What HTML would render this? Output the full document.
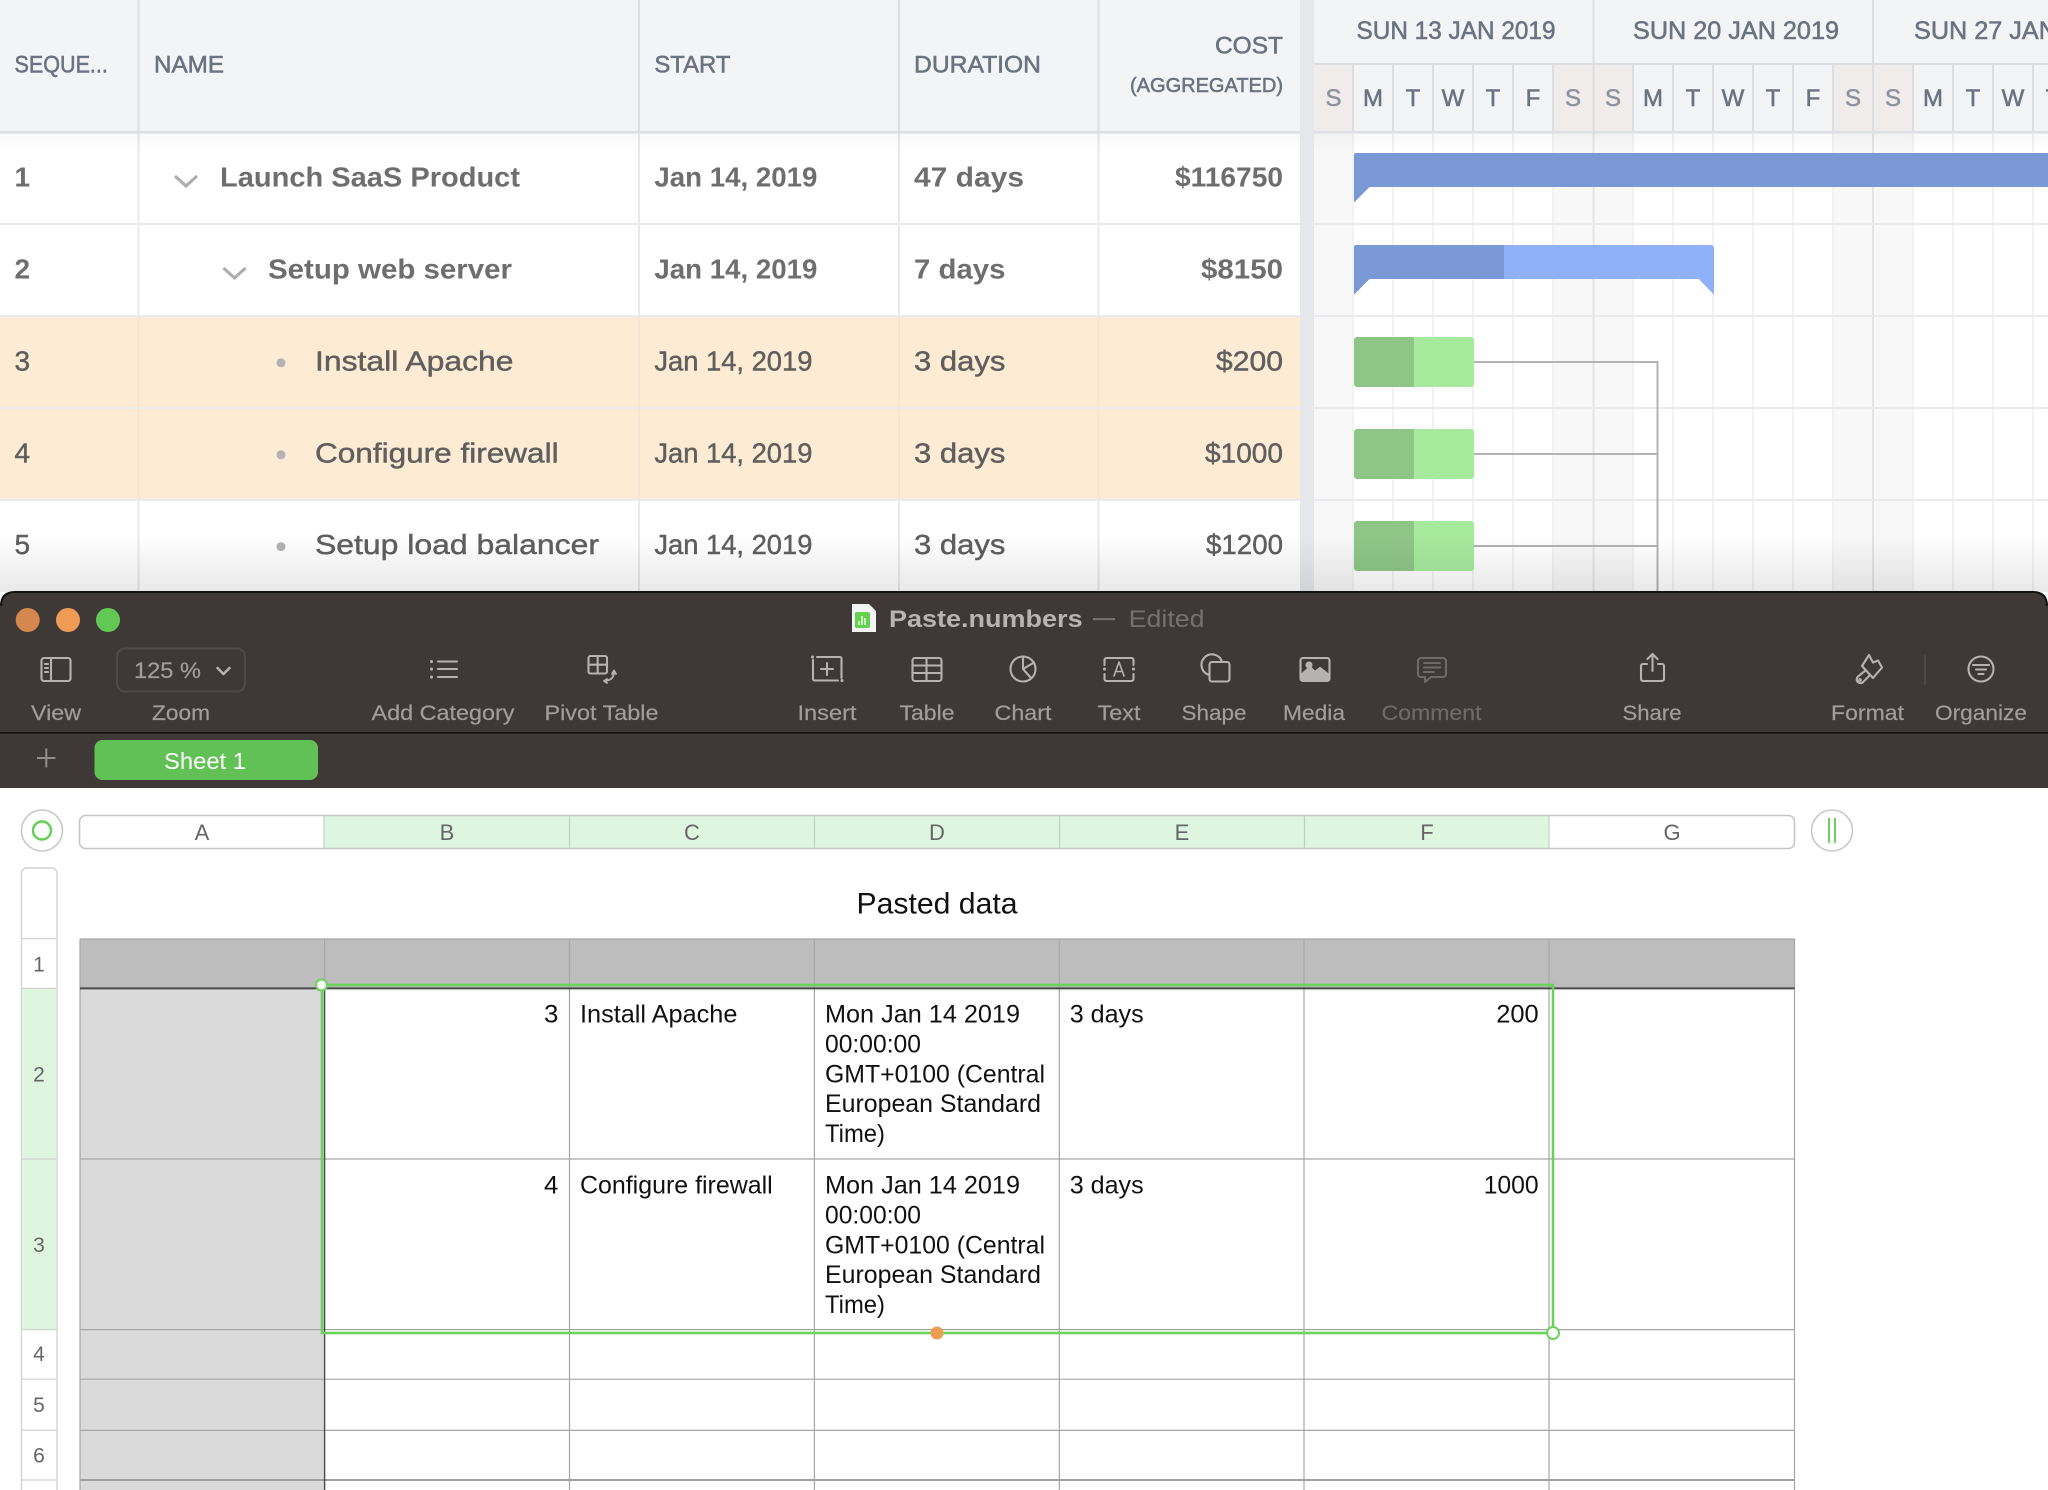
<!DOCTYPE html>
<html><head><meta charset="utf-8"><title>Paste.numbers</title>
<style>
html,body{margin:0;padding:0;background:#fff;width:2048px;height:1490px;overflow:hidden}
svg{display:block}
text{font-family:"Liberation Sans",sans-serif}
.h{font-size:24px;fill:#6b7280;stroke:#6b7280;stroke-width:.55}
.b{font-size:28px;font-weight:700;fill:#6e6e6e}
.r{font-size:28px;fill:#5f5f5f;stroke:#5f5f5f;stroke-width:.45}
.d{font-size:24px;fill:#6b7280;stroke:#6b7280;stroke-width:.55;text-anchor:middle}
.w{fill:#8f949c;stroke:#8f949c}
.t{font-size:21px;fill:#a19d9a;stroke:#a19d9a;stroke-width:.2}
.i{fill:none;stroke:#b6b2af;stroke-width:2.1;stroke-linecap:round;stroke-linejoin:round}
.c{font-size:25.3px;fill:#111}
.k{font-size:22px;fill:#666;text-anchor:middle}
.n{font-size:21px;fill:#666;text-anchor:middle}
</style></head><body>
<svg width="2048" height="1490" viewBox="0 0 2048 1490" xmlns="http://www.w3.org/2000/svg">
<defs>
<linearGradient id="sh" x1="0" y1="0" x2="0" y2="1"><stop offset="0" stop-color="#000" stop-opacity="0"/><stop offset="1" stop-color="#000" stop-opacity=".09"/></linearGradient>
<linearGradient id="hs" x1="0" y1="0" x2="0" y2="1"><stop offset="0" stop-color="#000" stop-opacity=".03"/><stop offset="1" stop-color="#000" stop-opacity="0"/></linearGradient>
</defs>
<rect width="2048" height="1490" fill="#fff"/>

<!-- gantt table header -->
<rect x="0" y="0" width="2048" height="132" fill="#f3f4f6"/>
<!-- highlighted rows -->
<rect x="0" y="316" width="1300" height="184" fill="#fdebd3"/>
<!-- gantt weekend columns -->
<g fill="#f8f8f8"><rect x="1314" y="133" width="39" height="460"/><rect x="1553" y="133" width="80" height="460"/><rect x="1833" y="133" width="80" height="460"/></g>
<!-- gantt header weekend -->
<g fill="#f1ecec"><rect x="1314" y="65" width="39" height="66"/><rect x="1553" y="65" width="80" height="66"/><rect x="1833" y="65" width="80" height="66"/></g>
<!-- gantt day lines body -->
<g stroke="#f1f2f3" stroke-width="2">
<path d="M1353 133V592M1393 133V592M1433 133V592M1473 133V592M1513 133V592M1553 133V592M1633 133V592M1673 133V592M1713 133V592M1753 133V592M1793 133V592M1833 133V592M1913 133V592M1953 133V592M1993 133V592M2033 133V592"/>
</g>
<g stroke="#e4e4e5" stroke-width="2"><path d="M1593.5 133V592M1873 133V592"/></g>
<!-- day lines header -->
<g stroke="#dcdee1" stroke-width="2">
<path d="M1353 65V132M1393 65V132M1433 65V132M1473 65V132M1513 65V132M1553 65V132M1633 65V132M1673 65V132M1713 65V132M1753 65V132M1793 65V132M1833 65V132M1913 65V132M1953 65V132M1993 65V132M2033 65V132"/>
<path d="M1593.5 0V132M1873 0V132M1314 64H2048"/>
<path d="M138.5 0V132M639 0V132M899 0V132M1098.5 0V132"/>
</g>
<!-- body row lines -->
<g stroke="#eaebec" stroke-width="2"><path d="M0 224H2048M0 316H2048M0 408H2048M0 500H2048"/></g>
<!-- body col lines -->
<g stroke="#e8e9eb" stroke-width="2"><path d="M138.5 133V316M138.5 500V592M639 133V592M899 133V592M1098.5 133V592"/></g>
<g stroke="#f4e6d3" stroke-width="2"><path d="M138.5 317V499M639 317V407M639 409V499M899 317V407M899 409V499M1098.5 317V407M1098.5 409V499"/></g>
<!-- header bottom and shadow -->
<rect x="0" y="133" width="2048" height="18" fill="url(#hs)"/>
<rect x="0" y="131" width="2048" height="2.5" fill="#dcdee1"/>
<!-- splitter -->
<rect x="1300" y="0" width="14" height="592" fill="#e6e7ea"/>

<!-- header text -->
<text class="h" x="14.5" y="72.7" textLength="93.4" lengthAdjust="spacingAndGlyphs">SEQUE...</text>
<text class="h" x="154" y="72.7" textLength="70" lengthAdjust="spacingAndGlyphs">NAME</text>
<text class="h" x="654.4" y="72.7" textLength="76" lengthAdjust="spacingAndGlyphs">START</text>
<text class="h" x="914" y="72.7" textLength="127" lengthAdjust="spacingAndGlyphs">DURATION</text>
<text class="h" x="1215" y="53.6" textLength="68" lengthAdjust="spacingAndGlyphs">COST</text>
<text class="h" style="font-size:20px" x="1130" y="92" textLength="153" lengthAdjust="spacingAndGlyphs">(AGGREGATED)</text>
<text class="h" style="font-size:25px" x="1356.5" y="39" textLength="199" lengthAdjust="spacingAndGlyphs">SUN 13 JAN 2019</text>
<text class="h" style="font-size:25px" x="1633" y="39" textLength="206" lengthAdjust="spacingAndGlyphs">SUN 20 JAN 2019</text>
<text class="h" style="font-size:25px" x="1914" y="39" textLength="206" lengthAdjust="spacingAndGlyphs">SUN 27 JAN 2019</text>

<text class="d w" x="1333.5" y="106">S</text><text class="d" x="1373" y="106">M</text><text class="d" x="1413" y="106">T</text><text class="d" x="1453" y="106">W</text><text class="d" x="1493" y="106">T</text><text class="d" x="1533" y="106">F</text><text class="d w" x="1573" y="106">S</text>
<text class="d w" x="1613" y="106">S</text><text class="d" x="1653" y="106">M</text><text class="d" x="1693" y="106">T</text><text class="d" x="1733" y="106">W</text><text class="d" x="1773" y="106">T</text><text class="d" x="1813" y="106">F</text><text class="d w" x="1853" y="106">S</text>
<text class="d w" x="1893" y="106">S</text><text class="d" x="1933" y="106">M</text><text class="d" x="1973" y="106">T</text><text class="d" x="2013" y="106">W</text><text class="d" x="2053" y="106">T</text>

<!-- rows -->
<g transform="translate(0,-1)">
<text class="b" x="14.5" y="187.5">1</text>
<path d="M175 177L186 187L197 177" fill="none" stroke="#aeaeae" stroke-width="3.2"/>
<text class="b" x="220" y="187.5" textLength="300" lengthAdjust="spacingAndGlyphs">Launch SaaS Product</text>
<text class="b" x="654.4" y="187.5" textLength="163" lengthAdjust="spacingAndGlyphs">Jan 14, 2019</text>
<text class="b" x="914" y="187.5" textLength="110" lengthAdjust="spacingAndGlyphs">47 days</text>
<text class="b" x="1175" y="187.5" textLength="108" lengthAdjust="spacingAndGlyphs">$116750</text>

<text class="b" x="14.5" y="279.5">2</text>
<path d="M223.5 269L234.5 279L245.5 269" fill="none" stroke="#aeaeae" stroke-width="3.2"/>
<text class="b" x="268" y="279.5" textLength="244" lengthAdjust="spacingAndGlyphs">Setup web server</text>
<text class="b" x="654.4" y="279.5" textLength="163" lengthAdjust="spacingAndGlyphs">Jan 14, 2019</text>
<text class="b" x="914" y="279.5" textLength="91.4" lengthAdjust="spacingAndGlyphs">7 days</text>
<text class="b" x="1201" y="279.5" textLength="82" lengthAdjust="spacingAndGlyphs">$8150</text>

<text class="r" x="14.5" y="371.5">3</text>
<circle cx="281" cy="363.8" r="4.5" fill="#b3b3b3"/>
<text class="r" x="315" y="371.5" textLength="198.5" lengthAdjust="spacingAndGlyphs">Install Apache</text>
<text class="r" x="654.4" y="371.5" textLength="158" lengthAdjust="spacingAndGlyphs">Jan 14, 2019</text>
<text class="r" x="914" y="371.5" textLength="91.4" lengthAdjust="spacingAndGlyphs">3 days</text>
<text class="r" x="1216" y="371.5" textLength="67" lengthAdjust="spacingAndGlyphs">$200</text>

<text class="r" x="14.5" y="463.5">4</text>
<circle cx="281" cy="455.8" r="4.5" fill="#b3b3b3"/>
<text class="r" x="315" y="463.5" textLength="243.6" lengthAdjust="spacingAndGlyphs">Configure firewall</text>
<text class="r" x="654.4" y="463.5" textLength="158" lengthAdjust="spacingAndGlyphs">Jan 14, 2019</text>
<text class="r" x="914" y="463.5" textLength="91.4" lengthAdjust="spacingAndGlyphs">3 days</text>
<text class="r" x="1205" y="463.5" textLength="78" lengthAdjust="spacingAndGlyphs">$1000</text>

<text class="r" x="14.5" y="555.2">5</text>
<circle cx="281" cy="547.6" r="4.5" fill="#b3b3b3"/>
<text class="r" x="315" y="555.2" textLength="284" lengthAdjust="spacingAndGlyphs">Setup load balancer</text>
<text class="r" x="654.4" y="555.2" textLength="158" lengthAdjust="spacingAndGlyphs">Jan 14, 2019</text>
<text class="r" x="914" y="555.2" textLength="91.4" lengthAdjust="spacingAndGlyphs">3 days</text>
<text class="r" x="1206" y="555.2" textLength="77" lengthAdjust="spacingAndGlyphs">$1200</text>
</g>

<!-- gantt bars -->
<path d="M1354 155a2 2 0 0 1 2-2H2048V187H1369.5L1354 202.5Z" fill="#7b98d6"/>
<path d="M1504 245H1711a3 3 0 0 1 3 3V294.7L1698.7 279H1504Z" fill="#8fb1f9"/>
<path d="M1504 245H1356a2 2 0 0 0-2 2V294.7L1369.5 279H1504Z" fill="#7b98d6"/>
<g>
<rect x="1354" y="337" width="120" height="50" rx="3" fill="#a7e99d"/><path d="M1414 337H1357a3 3 0 0 0-3 3V384a3 3 0 0 0 3 3H1414Z" fill="#8fc688"/>
<rect x="1354" y="429" width="120" height="50" rx="3" fill="#a7e99d"/><path d="M1414 429H1357a3 3 0 0 0-3 3V476a3 3 0 0 0 3 3H1414Z" fill="#8fc688"/>
<rect x="1354" y="521" width="120" height="50" rx="3" fill="#a7e99d"/><path d="M1414 521H1357a3 3 0 0 0-3 3V568a3 3 0 0 0 3 3H1414Z" fill="#8fc688"/>
</g>
<path d="M1474 362H1657.5M1474 454H1657.5M1474 546H1657.5M1657.5 361V592" fill="none" stroke="#b3b3b3" stroke-width="2"/>

<!-- window shadow -->
<rect x="0" y="535" width="2048" height="57" fill="url(#sh)"/>

<!-- numbers window chrome -->
<path d="M0 788V607Q0 592 15 592H2033Q2048 592 2048 607V788Z" fill="#3e3937"/>
<path d="M1 606Q1 592 15 592H2033Q2047 592 2047 606" fill="none" stroke="#111" stroke-width="2"/>
<circle cx="27.7" cy="620" r="12" fill="#d4884f"/><circle cx="68" cy="620" r="12" fill="#f09c56"/><circle cx="108" cy="620" r="12" fill="#62c955"/>
<rect x="0" y="732" width="2048" height="1.6" fill="#111"/>

<!-- title -->
<path d="M852 604H869L876 611V632H852Z" fill="#f4f4f4"/>
<rect x="855" y="612" width="15" height="16" rx="2" fill="#65d24f"/>
<path d="M859 625V621M862 625V616M865 625V618" stroke="#eafbe4" stroke-width="1.6"/>
<text x="889" y="627" font-size="24" font-weight="700" fill="#b7b3b0" textLength="193.6" lengthAdjust="spacingAndGlyphs">Paste.numbers</text>
<rect x="1093" y="618" width="22" height="2.2" fill="#75706d"/>
<text x="1128.6" y="627" font-size="24" fill="#75706d" textLength="76" lengthAdjust="spacingAndGlyphs">Edited</text>

<!-- toolbar icons -->
<g class="i">
<rect x="41.5" y="658" width="29" height="23" rx="2.5"/><path d="M51 658V681M45 664H48M45 668H48M45 672H48"/>
<rect x="117" y="648.5" width="128" height="43" rx="8" stroke="#4f4a48" stroke-width="2"/>
<path d="M217.5 668L223.5 674L229.5 668" stroke-width="2.6"/>
<path d="M431.5 661.5V661.6M431.5 669V669.1M431.5 677V677.1" stroke-width="3"/>
<path d="M438 661.5H457M438 669H457M438 677H457"/>
<rect x="588.5" y="656" width="18.5" height="17.5" rx="2"/><path d="M597.7 656V673.5M588.5 664.7H607"/>
<path d="M614 672Q614 680 605 681M612 674L614 670.5L616 674M607 679L604 681L607 683" stroke-width="1.8"/>
<path d="M813 660V679a1.5 1.5 0 0 0 1.5 1.5H838M817 657H840a1.5 1.5 0 0 1 1.5 1.5V678M821 669H833M827 663V675"/>
<path d="M812.5 657V657.1M842 680.5V680.6" stroke-width="3"/>
<rect x="912.5" y="658" width="29" height="23" rx="2.5"/><path d="M912.5 665.5H941.5M912.5 673H941.5M926.5 658V681"/>
<circle cx="1023" cy="669" r="12.5"/><path d="M1023 656.5V669L1034 662.5M1023 669L1031 678"/>
<path d="M1104.5 665V660a2 2 0 0 1 2-2H1131.5a2 2 0 0 1 2 2V665M1104.5 674V679a2 2 0 0 0 2 2H1131.5a2 2 0 0 0 2-2V674"/>
<path d="M1104.5 669V669.1M1133.5 669V669.1" stroke-width="3"/>
<path d="M1114 676L1119 662L1124 676M1116 671.5H1122" stroke-width="1.6"/>
<path d="M1209.3 675A10.5 10.5 0 1 1 1222 661.7"/>
<rect x="1209.5" y="662" width="20" height="19.5" rx="2.5"/>
<rect x="1300.5" y="658" width="29" height="23" rx="2.5"/>
<path d="M1301 680V675L1310 667L1315 672L1320 668L1329 675V680Z" fill="#b6b2af"/><circle cx="1309" cy="665" r="2.5" fill="#b6b2af"/>
<g stroke="#6e6a67"><path d="M1421 658H1443a3 3 0 0 1 3 3V674a3 3 0 0 1-3 3H1431L1425 682V677H1421a3 3 0 0 1-3-3V661a3 3 0 0 1 3-3ZM1424 663H1440M1424 667.5H1440M1424 672H1434"/></g>
<path d="M1647 664H1643a2 2 0 0 0-2 2V679a2 2 0 0 0 2 2H1662a2 2 0 0 0 2-2V666a2 2 0 0 0-2-2H1658M1652.5 671V654M1647.5 659L1652.5 654L1657.5 659"/>
<path d="M1869 655L1873 662.5L1878 660.5L1882 667.5L1873 678L1862 666ZM1865.5 670.5L1858 676.5a3.8 3.8 0 1 0 5.5 5.2L1870 675"/>
<circle cx="1860" cy="680" r=".8"/>
<path d="M1925 656V684" stroke="#4f4a48"/>
<circle cx="1981" cy="669" r="12.5"/><path d="M1973 665H1989M1976 669.5H1986M1978.5 674H1983.5"/>
</g>

<!-- toolbar labels -->
<text class="t" x="31" y="720" textLength="50" lengthAdjust="spacingAndGlyphs">View</text>
<text class="t" x="152" y="720" textLength="58" lengthAdjust="spacingAndGlyphs">Zoom</text>
<text class="t" style="font-size:22px" x="134" y="678" textLength="67" lengthAdjust="spacingAndGlyphs">125 %</text>
<text class="t" x="371.5" y="720" textLength="143" lengthAdjust="spacingAndGlyphs">Add Category</text>
<text class="t" x="544.5" y="720" textLength="114" lengthAdjust="spacingAndGlyphs">Pivot Table</text>
<text class="t" x="797.5" y="720" textLength="59" lengthAdjust="spacingAndGlyphs">Insert</text>
<text class="t" x="899.5" y="720" textLength="55" lengthAdjust="spacingAndGlyphs">Table</text>
<text class="t" x="994.5" y="720" textLength="57" lengthAdjust="spacingAndGlyphs">Chart</text>
<text class="t" x="1097.5" y="720" textLength="43" lengthAdjust="spacingAndGlyphs">Text</text>
<text class="t" x="1181.5" y="720" textLength="65" lengthAdjust="spacingAndGlyphs">Shape</text>
<text class="t" x="1283" y="720" textLength="62" lengthAdjust="spacingAndGlyphs">Media</text>
<text class="t" style="fill:#6e6a67;stroke:#6e6a67" x="1381.5" y="720" textLength="100" lengthAdjust="spacingAndGlyphs">Comment</text>
<text class="t" x="1622.5" y="720" textLength="59" lengthAdjust="spacingAndGlyphs">Share</text>
<text class="t" x="1831" y="720" textLength="73" lengthAdjust="spacingAndGlyphs">Format</text>
<text class="t" x="1935" y="720" textLength="92" lengthAdjust="spacingAndGlyphs">Organize</text>

<!-- sheet tab -->
<path d="M37 758H55.5M46.3 748.5V767.5" stroke="#918d8a" stroke-width="2" fill="none"/>
<rect x="94.5" y="740" width="223.5" height="40" rx="8" fill="#62c154"/>
<text x="164" y="769" font-size="23" fill="#fff" textLength="82" lengthAdjust="spacingAndGlyphs">Sheet 1</text>

<!-- column bar -->
<rect x="324" y="816" width="1225" height="32" fill="#def5df"/>
<rect x="79.5" y="815.5" width="1715" height="33" rx="6" fill="none" stroke="#c6c6c6" stroke-width="1.6"/>
<path d="M324 816V848M569.5 816V848M814.5 816V848M1059.5 816V848M1304.5 816V848M1549 816V848" stroke="#bdd3bf" stroke-width="1.2"/>
<text class="k" x="202" y="840">A</text><text class="k" x="447" y="840">B</text><text class="k" x="692" y="840">C</text><text class="k" x="937" y="840">D</text><text class="k" x="1182" y="840">E</text><text class="k" x="1427" y="840">F</text><text class="k" x="1672" y="840">G</text>
<circle cx="42" cy="830.5" r="20.5" fill="#fff" stroke="#c9c9c9" stroke-width="1.6"/>
<circle cx="42" cy="830.5" r="9" fill="none" stroke="#62d055" stroke-width="2.4"/>
<circle cx="1832" cy="830.5" r="20.5" fill="#fff" stroke="#c9c9c9" stroke-width="1.6"/>
<path d="M1829 818V843M1835 818V843" stroke="#72cf5f" stroke-width="2"/>

<!-- row bar -->
<path d="M21.5 1491V873a5 5 0 0 1 5-5H52a5 5 0 0 1 5 5V1491" fill="#fff" stroke="#d2d2d2" stroke-width="1.4"/>
<rect x="22.2" y="988.5" width="34" height="341" fill="#def5df"/>
<path d="M22 938.6H57M22 988.4H57M22 1159H57M22 1329.6H57M22 1379.2H57M22 1430.4H57M22 1480H57" stroke="#d2d2d2" stroke-width="1.2"/>
<g transform="translate(0,-1)"><text class="n" x="39" y="972.4">1</text><text class="n" x="39" y="1082.6">2</text><text class="n" x="39" y="1253">3</text><text class="n" x="39" y="1362">4</text><text class="n" x="39" y="1413">5</text><text class="n" x="39" y="1463.5">6</text></g>

<!-- title -->
<text x="856.5" y="913.5" font-size="30" fill="#111" textLength="161" lengthAdjust="spacingAndGlyphs">Pasted data</text>

<!-- table -->
<rect x="80" y="938.6" width="1714.5" height="49.8" fill="#bcbdbc"/>
<rect x="80" y="988.4" width="244.6" height="502" fill="#dadada"/>
<g stroke="#a6a6a6" stroke-width="1.2" fill="none">
<path d="M80 939H1794.5V1491M80 939V1491"/>
<path d="M569.5 939V1491M814.4 939V1491M1059.3 939V1491M1304 939V1491M1549 939V1491"/>
<path d="M324.6 939V989"/>
<path d="M80 1159H1794.5M80 1329.6H1794.5M80 1379.2H1794.5M80 1430.4H1794.5"/>
</g>
<path d="M80 1480H1794.5" stroke="#a0a0a0" stroke-width="2"/>
<path d="M80 988.4H1794.5" stroke="#4a4a4a" stroke-width="2"/>
<path d="M324.6 988V1491" stroke="#4a4a4a" stroke-width="1.4"/>

<!-- cells -->
<g transform="translate(0,-0.8)">
<text class="c" x="544" y="1023.5" textLength="14.4" lengthAdjust="spacingAndGlyphs">3</text>
<text class="c" x="580" y="1023.5" textLength="157.4" lengthAdjust="spacingAndGlyphs">Install Apache</text>
<text class="c" x="825" y="1023.5" textLength="195" lengthAdjust="spacingAndGlyphs">Mon Jan 14 2019</text>
<text class="c" x="825" y="1053.3" textLength="96" lengthAdjust="spacingAndGlyphs">00:00:00</text>
<text class="c" x="825" y="1083.2" textLength="220" lengthAdjust="spacingAndGlyphs">GMT+0100 (Central</text>
<text class="c" x="825" y="1113" textLength="216" lengthAdjust="spacingAndGlyphs">European Standard</text>
<text class="c" x="825" y="1143" textLength="60" lengthAdjust="spacingAndGlyphs">Time)</text>
<text class="c" x="1069.7" y="1023.5" textLength="74" lengthAdjust="spacingAndGlyphs">3 days</text>
<text class="c" x="1496.2" y="1023.5" textLength="42.5" lengthAdjust="spacingAndGlyphs">200</text>

<text class="c" x="544" y="1194.5" textLength="14.4" lengthAdjust="spacingAndGlyphs">4</text>
<text class="c" x="580" y="1194.5" textLength="192.7" lengthAdjust="spacingAndGlyphs">Configure firewall</text>
<text class="c" x="825" y="1194.5" textLength="195" lengthAdjust="spacingAndGlyphs">Mon Jan 14 2019</text>
<text class="c" x="825" y="1224.3" textLength="96" lengthAdjust="spacingAndGlyphs">00:00:00</text>
<text class="c" x="825" y="1254.2" textLength="220" lengthAdjust="spacingAndGlyphs">GMT+0100 (Central</text>
<text class="c" x="825" y="1284" textLength="216" lengthAdjust="spacingAndGlyphs">European Standard</text>
<text class="c" x="825" y="1314" textLength="60" lengthAdjust="spacingAndGlyphs">Time)</text>
<text class="c" x="1069.7" y="1194.5" textLength="74" lengthAdjust="spacingAndGlyphs">3 days</text>
<text class="c" x="1483.7" y="1194.5" textLength="55" lengthAdjust="spacingAndGlyphs">1000</text>
</g>

<!-- selection -->
<rect x="322" y="985" width="1231" height="348" fill="none" stroke="#6bd35a" stroke-width="2.6"/>
<circle cx="321.5" cy="985" r="5.5" fill="#fff" stroke="#6bd35a" stroke-width="2"/>
<circle cx="1553" cy="1333" r="6" fill="#fff" stroke="#6bd35a" stroke-width="2"/>
<circle cx="937" cy="1333" r="6.5" fill="#ee9d55"/>
</svg>
</body></html>
